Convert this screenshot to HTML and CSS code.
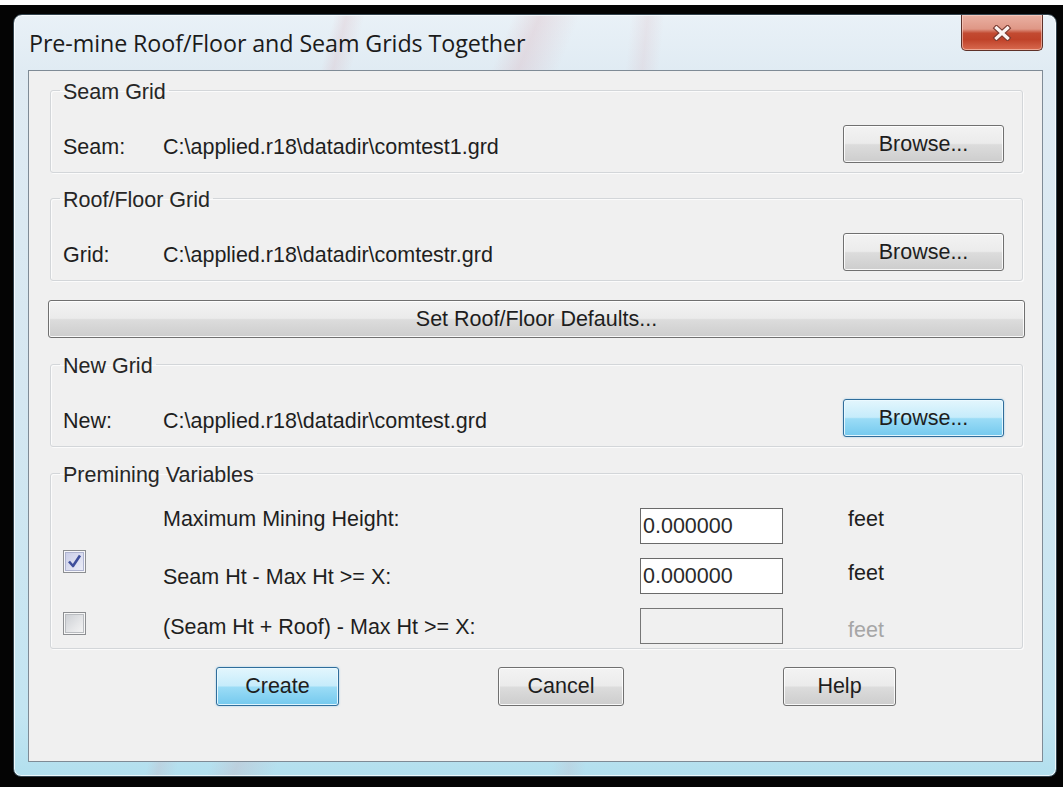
FILE: index.html
```html
<!DOCTYPE html>
<html lang="en">
<head>
<meta charset="utf-8">
<title>Pre-mine Roof/Floor and Seam Grids Together</title>
<link rel="stylesheet" href="styles.css">
</head>
<body>
<div class="screen">
  <div class="strip"></div>
  <div class="desk">
    <div class="window">
      <div class="titlebar">
        <span class="title">Pre-mine Roof/Floor and Seam Grids Together</span>
        <button class="close" aria-label="Close">
          <svg width="20" height="16" viewBox="0 0 20 16">
            <path d="M4.5 3 L15.5 13 M15.5 3 L4.5 13" stroke="#7a3a30" stroke-width="5.4" stroke-linecap="square" fill="none"/>
            <path d="M4.5 3 L15.5 13 M15.5 3 L4.5 13" stroke="#fbf4f2" stroke-width="3.2" stroke-linecap="square" fill="none"/>
          </svg>
        </button>
      </div>

      <div class="client">
        <fieldset class="group first">
          <legend>Seam Grid</legend>
          <div class="file-row">
            <span class="file-label">Seam:</span>
            <span class="file-path">C:\applied.r18\datadir\comtest1.grd</span>
            <button class="btn browse">Browse...</button>
          </div>
        </fieldset>

        <fieldset class="group second">
          <legend>Roof/Floor Grid</legend>
          <div class="file-row">
            <span class="file-label">Grid:</span>
            <span class="file-path">C:\applied.r18\datadir\comtestr.grd</span>
            <button class="btn browse">Browse...</button>
          </div>
        </fieldset>

        <button class="btn wide">Set Roof/Floor Defaults...</button>

        <fieldset class="group third">
          <legend>New Grid</legend>
          <div class="file-row">
            <span class="file-label">New:</span>
            <span class="file-path">C:\applied.r18\datadir\comtest.grd</span>
            <button class="btn browse focus">Browse...</button>
          </div>
        </fieldset>

        <fieldset class="group fourth">
          <legend>Premining Variables</legend>
          <div class="vars">
            <span class="slot"></span>
            <span class="var-label row1">Maximum Mining Height:</span>
            <span class="field">0.000000</span>
            <span class="unit row1">feet</span>

            <span class="check checked row2">
              <svg width="21" height="21" viewBox="0 0 21 21">
                <path d="M5 10.5 L9 15 L16 4.5" stroke="#3f4f9c" stroke-width="2.6" fill="none" stroke-linejoin="round"/>
              </svg>
            </span>
            <span class="var-label row2">Seam Ht - Max Ht &gt;= X:</span>
            <span class="field">0.000000</span>
            <span class="unit row2">feet</span>

            <span class="check row3"></span>
            <span class="var-label row3">(Seam Ht + Roof) - Max Ht &gt;= X:</span>
            <span class="field disabled"></span>
            <span class="unit row3 muted">feet</span>
          </div>
        </fieldset>

        <div class="actions">
          <button class="btn action create focus">Create</button>
          <button class="btn action cancel">Cancel</button>
          <button class="btn action help">Help</button>
        </div>
      </div>
    </div>
  </div>
</div>
</body>
</html>
```

FILE: styles.css
```css
* {
  box-sizing: border-box;
}

html,
body {
  margin: 0;
  padding: 0;
}

body {
  width: 1063px;
  height: 787px;
  overflow: hidden;
  background: #000;
  font-family: "Liberation Sans", Arial, sans-serif;
  font-size: 21.5px;
  color: #1e1e1e;
}

.screen {
  display: flex;
  flex-direction: column;
  height: 787px;
}

.strip {
  flex: none;
  height: 5px;
  background: #fff;
}

.desk {
  flex: 1;
  display: flex;
  align-items: flex-start;
  padding: 9px 6px 0 13px;
  background: #040404;
}

/* Aero glass frame */
.window {
  width: 1044px;
  height: 763px;
  display: flex;
  flex-direction: column;
  padding: 0 13px 14px 14px;
  border: 1px solid #33444f;
  border-radius: 9px 9px 8px 8px;
  background:
    linear-gradient(112deg, transparent 37%, rgba(214, 150, 160, 0.22) 39%, transparent 42%),
    linear-gradient(104deg, transparent 26%, rgba(214, 150, 160, 0.18) 27%, transparent 28.5%),
    linear-gradient(96deg, transparent 55%, rgba(214, 150, 160, 0.14) 56.5%, transparent 58%),
    linear-gradient(to bottom, #e9f1f7 0, #e0ebf3 56px, #d5e7f1 50%, #c3e5f2 92%, #b2dfee 100%);
  box-shadow: inset 0 0 0 1px rgba(255, 255, 255, 0.75);
}

.titlebar {
  flex: none;
  height: 55px;
  display: flex;
  justify-content: space-between;
  align-items: flex-start;
}

.title {
  margin: 14px 0 0 1px;
  font-family: "Open Sans", "Noto Sans", sans-serif;
  font-size: 23.3px;
  line-height: 28px;
  color: #1b1b1b;
  letter-spacing: -0.1px;
}

.close {
  width: 82px;
  height: 36px;
  padding: 0;
  display: flex;
  align-items: center;
  justify-content: center;
  border: 1px solid #5e3129;
  border-top: none;
  border-radius: 0 0 5px 5px;
  background: linear-gradient(to bottom, #eab1a3 0%, #df9786 40%, #c24a31 52%, #bf4229 70%, #d86a4f 100%);
  box-shadow: inset 0 0 0 1px rgba(255, 220, 210, 0.55);
}

/* Dialog client area */
.client {
  flex: 1;
  display: flex;
  flex-direction: column;
  padding: 0 19px 0 21px;
  border: 1px solid #7f8b96;
  background: #f0f0f0;
}

.group {
  margin: 0;
  padding: 21px 18px 9px 12px;
  min-width: 0;
  border: 1px solid #d3d6d9;
  border-radius: 3px;
  box-shadow: 1px 1px 0 #fbfbfb, inset 1px 1px 0 #fbfbfb;
}

.group legend {
  height: 28px;
  margin-left: -3px;
  padding: 4px 3px 0;
  line-height: 24px;
  color: #262626;
}

.first {
  margin-top: 5px;
}

.second {
  margin-top: 11px;
}

.third {
  margin-top: 12px;
}

.fourth {
  margin-top: 12px;
  padding-bottom: 4px;
}

.file-row {
  height: 38px;
  display: flex;
  align-items: center;
}

.file-label {
  flex: none;
  width: 100px;
  margin-top: 5px;
  line-height: 24px;
}

.file-path {
  margin-top: 5px;
  line-height: 24px;
}

/* Vista push buttons */
.btn {
  font: inherit;
  color: #1e1e1e;
  padding: 0;
  height: 38px;
  border: 1px solid #707070;
  border-radius: 3px;
  background: linear-gradient(to bottom, #f3f3f3 0%, #ebebeb 48%, #dcdcdc 52%, #cdcdcd 100%);
  box-shadow: inset 0 0 0 1px rgba(255, 255, 255, 0.85);
}

.btn.focus {
  border-color: #2f6d9b;
  background: linear-gradient(to bottom, #e3f6fd 0%, #c6ecfb 48%, #9bdcf6 52%, #74c9ee 100%);
  box-shadow: inset 0 0 0 1px rgba(235, 250, 255, 0.9), 0 0 2px rgba(60, 160, 220, 0.5);
}

.browse {
  flex: none;
  width: 161px;
  margin-left: auto;
}

.wide {
  flex: none;
  margin: 19px -2px 0 -2px;
}

/* Premining variables grid */
.vars {
  display: grid;
  grid-template-columns: 100px 477px 143px auto;
  grid-auto-rows: 36px;
  row-gap: 14px;
  align-items: start;
}

.var-label,
.unit {
  line-height: 24px;
}

.unit {
  margin-left: 65px;
}

.var-label.row1,
.unit.row1 {
  margin-top: -1px;
}

.var-label.row2,
.var-label.row3 {
  margin-top: 7px;
}

.unit.row2 {
  margin-top: 3px;
}

.unit.row3 {
  margin-top: 10px;
}

.muted {
  color: #a6a6a6;
}

.field {
  height: 36px;
  padding: 5px 0 0 2px;
  line-height: 24px;
  border: 1px solid #6a6a6a;
  background: #fff;
  color: #2a2a2a;
}

.field.disabled {
  background: #f0f0f0;
  border-color: #767676;
}

.check {
  width: 23px;
  height: 23px;
  display: flex;
  align-items: center;
  justify-content: center;
  border: 1px solid #8c8e91;
  background: linear-gradient(135deg, #c9ccd1 0%, #e6e7e9 60%, #f6f6f6 100%);
  box-shadow: inset 0 0 0 1px #f7f7f7, inset 0 0 0 2px #b9bcc0;
}

.check.checked {
  background: linear-gradient(135deg, #c7cbe6 0%, #dfe1f2 60%, #eef0f8 100%);
  box-shadow: inset 0 0 0 1px #f7f7fb, inset 0 0 0 2px #aeb3cf;
}

.check.row2 {
  margin-top: -8px;
}

.check.row3 {
  margin-top: 4px;
}

/* Bottom command buttons */
.actions {
  display: flex;
  gap: 159px;
  margin-top: 18px;
  padding-left: 166px;
}

.action {
  height: 39px;
}

.create {
  width: 123px;
}

.cancel {
  width: 126px;
}

.help {
  width: 113px;
}
```
